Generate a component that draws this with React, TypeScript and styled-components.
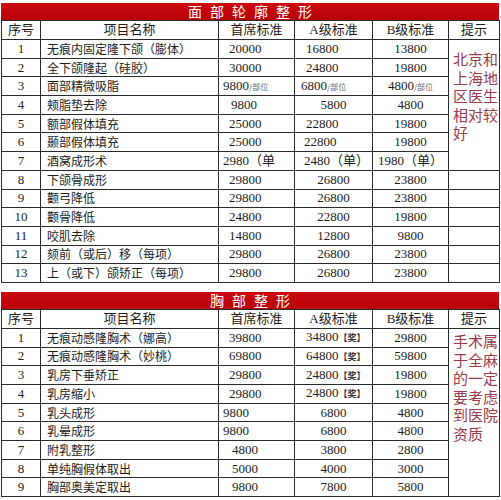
import styled, { createGlobalStyle } from "styled-components";

type Cell = { t: string; pad?: number };
type Row = { no: number; name: string; head: Cell; a: Cell; b: Cell };

const faceRows: Row[] = [
  { no: 1, name: "无痕内固定隆下颌（膨体）", head: { t: "20000", pad: 10 }, a: { t: "16800", pad: 11 }, b: { t: "13800" } },
  { no: 2, name: "全下颌隆起（硅胶）", head: { t: "30000", pad: 10 }, a: { t: "24800", pad: 11 }, b: { t: "19800" } },
  { no: 3, name: "面部精微吸脂", head: { t: "9800/部位", pad: 4 }, a: { t: "6800/部位", pad: 6 }, b: { t: "4800/部位" } },
  { no: 4, name: "颊脂垫去除", head: { t: "9800", pad: 12 }, a: { t: "5800" }, b: { t: "4800" } },
  { no: 5, name: "额部假体填充", head: { t: "25000", pad: 10 }, a: { t: "22800", pad: 11 }, b: { t: "19800" } },
  { no: 6, name: "颞部假体填充", head: { t: "25000", pad: 10 }, a: { t: "22800", pad: 9 }, b: { t: "19800" } },
  { no: 7, name: "酒窝成形术", head: { t: "2980（单", pad: 4 }, a: { t: "2480（单）", pad: 9 }, b: { t: "1980（单）" } },
  { no: 8, name: "下颌骨成形", head: { t: "29800", pad: 10 }, a: { t: "26800" }, b: { t: "23800" } },
  { no: 9, name: "颧弓降低", head: { t: "29800", pad: 10 }, a: { t: "26800" }, b: { t: "23800" } },
  { no: 10, name: "颧骨降低", head: { t: "24800", pad: 10 }, a: { t: "22800" }, b: { t: "19800" } },
  { no: 11, name: "咬肌去除", head: { t: "14800", pad: 10 }, a: { t: "12800" }, b: { t: "9800" } },
  { no: 12, name: "颏前（或后）移（每项）", head: { t: "29800", pad: 10 }, a: { t: "26800" }, b: { t: "23800" } },
  { no: 13, name: "上（或下）颌矫正（每项）", head: { t: "29800", pad: 10 }, a: { t: "26800" }, b: { t: "23800" } },
];

const chestRows: Row[] = [
  { no: 1, name: "无痕动感隆胸术（娜高）", head: { t: "39800", pad: 10 }, a: { t: "34800【奖】", pad: 11 }, b: { t: "29800" } },
  { no: 2, name: "无痕动感隆胸术（妙桃）", head: { t: "69800", pad: 10 }, a: { t: "64800【奖】", pad: 11 }, b: { t: "59800" } },
  { no: 3, name: "乳房下垂矫正", head: { t: "29800", pad: 10 }, a: { t: "24800【奖】", pad: 11 }, b: { t: "19800" } },
  { no: 4, name: "乳房缩小", head: { t: "29800", pad: 10 }, a: { t: "24800【奖】", pad: 11 }, b: { t: "19800" } },
  { no: 5, name: "乳头成形", head: { t: "9800", pad: 4 }, a: { t: "6800" }, b: { t: "4800" } },
  { no: 6, name: "乳晕成形", head: { t: "9800", pad: 4 }, a: { t: "6800" }, b: { t: "4800" } },
  { no: 7, name: "附乳整形", head: { t: "4800", pad: 13 }, a: { t: "3800" }, b: { t: "2800" } },
  { no: 8, name: "单纯胸假体取出", head: { t: "5000", pad: 13 }, a: { t: "4000" }, b: { t: "3000" } },
  { no: 9, name: "胸部奥美定取出", head: { t: "9800", pad: 13 }, a: { t: "7800" }, b: { t: "5800" } },
];

const colWidths = [39, 178, 76, 78, 76, 51];

function Price({ cell }: { cell: Cell }) {
  if (cell.t.includes("/部位")) {
    const [num] = cell.t.split("/");
    return (
      <>
        {num}
        <Unit>/部位</Unit>
      </>
    );
  }
  if (cell.t.includes("【奖】")) {
    return (
      <>
        {cell.t.replace("【奖】", "")}
        <Award>【奖】</Award>
      </>
    );
  }
  return <>{cell.t}</>;
}

interface SectionProps {
  title: string;
  rows: Row[];
  tip: string;
  tipSpan: number;
  tipTop: number;
}

function PriceSection({ title, rows, tip, tipSpan, tipTop }: SectionProps) {
  return (
    <Section>
      <TitleBar>{title}</TitleBar>
      <Table>
        <colgroup>
          {colWidths.map((w, i) => (
            <Col key={i} $w={w} />
          ))}
        </colgroup>
        <thead>
          <HeadRow>
            <HeadCell>序号</HeadCell>
            <HeadCell>项目名称</HeadCell>
            <HeadCell>首席标准</HeadCell>
            <HeadCell>A级标准</HeadCell>
            <HeadCell>B级标准</HeadCell>
            <HeadCell>提示</HeadCell>
          </HeadRow>
        </thead>
        <tbody>
          {rows.map((r, i) => (
            <BodyRow key={r.no}>
              <NoCell>{r.no}</NoCell>
              <NameCell>{r.name}</NameCell>
              <PriceCell $pad={r.head.pad}>
                <Price cell={r.head} />
              </PriceCell>
              <PriceCell $pad={r.a.pad}>
                <Price cell={r.a} />
              </PriceCell>
              <PriceCell $pad={r.b.pad}>
                <Price cell={r.b} />
              </PriceCell>
              {i === 0 && (
                <TipCell rowSpan={tipSpan} $top={tipTop}>
                  {tip}
                </TipCell>
              )}
              {i >= tipSpan && <EmptyCell />}
            </BodyRow>
          ))}
        </tbody>
      </Table>
    </Section>
  );
}

export default function App() {
  return (
    <>
      <GlobalStyle />
      <Page>
        <PriceSection
          title="面部轮廓整形"
          rows={faceRows}
          tip="北京和上海地区医生相对较好"
          tipSpan={7}
          tipTop={10}
        />
        <PriceSection
          title="胸部整形"
          rows={chestRows}
          tip="手术属于全麻的一定要考虑到医院资质"
          tipSpan={9}
          tipTop={3}
        />
      </Page>
    </>
  );
}

const GlobalStyle = createGlobalStyle`
  body {
    margin: 0;
    background: #fff;
  }
`;

const Page = styled.div`
  display: flex;
  flex-direction: column;
  row-gap: 9px;
  width: 498px;
  padding: 3px 0 0 1px;
  font-family: "Liberation Serif", "Noto Sans CJK SC", serif;
  color: #1c1c1c;
`;

const Section = styled.div`
  display: flex;
  flex-direction: column;
`;

const TitleBar = styled.div`
  height: 17px;
  background: linear-gradient(#cc0a10, #b80008);
  color: #fff;
  font-family: "Noto Sans CJK SC", sans-serif;
  font-size: 14px;
  line-height: 17px;
  letter-spacing: 8px;
  padding-left: 8px;
  text-align: center;
`;

const Table = styled.table`
  width: 498px;
  table-layout: fixed;
  border-collapse: collapse;
  border: 1px solid #2a2a2a;
`;

const Col = styled.col<{ $w: number }>`
  width: ${(p) => p.$w}px;
`;

const HeadRow = styled.tr`
  height: 19px;
`;

const BodyRow = styled.tr`
  height: 18.7px;
`;

const BaseCell = styled.td`
  border: 1px solid #2a2a2a;
  padding: 0;
  font-size: 13px;
  line-height: 16px;
  white-space: nowrap;
  overflow: hidden;
  vertical-align: middle;
`;

const HeadCell = styled(BaseCell).attrs({ as: "th" })`
  font-weight: 400;
  text-align: center;
`;

const NoCell = styled(BaseCell)`
  text-align: center;
`;

const NameCell = styled(BaseCell)`
  text-align: left;
  padding-left: 6px;
  font-size: 12px;
  font-family: "Noto Sans CJK SC", sans-serif;
`;

const PriceCell = styled(BaseCell)<{ $pad?: number }>`
  text-align: ${(p) => (p.$pad === undefined ? "center" : "left")};
  padding-left: ${(p) => p.$pad ?? 0}px;
`;

const EmptyCell = styled(BaseCell)``;

const TipCell = styled(BaseCell)<{ $top: number }>`
  vertical-align: top;
  padding: ${(p) => p.$top}px 0 0 4px;
  color: #983c4c;
  font-family: "Noto Sans CJK SC", sans-serif;
  font-size: 15px;
  line-height: 18.6px;
  white-space: normal;
  word-break: break-all;
  text-align: left;
`;

const Unit = styled.span`
  font-family: "Noto Sans CJK SC", sans-serif;
  font-size: 8px;
  color: #666;
`;

const Award = styled.span`
  font-family: "Noto Sans CJK SC", sans-serif;
  font-size: 9px;
  font-weight: 700;
  color: #333;
`;
